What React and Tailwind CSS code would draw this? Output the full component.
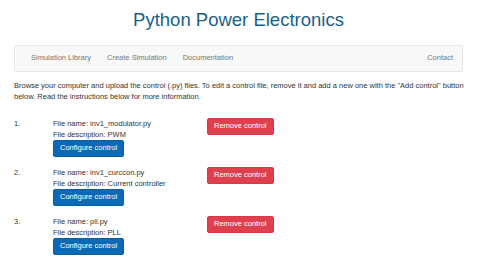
export default function App() {
  const rows = [
    { n: "1.", name: "inv1_modulator.py", desc: "PWM" },
    { n: "2.", name: "inv1_curccon.py", desc: "Current controller" },
    { n: "3.", name: "pll.py", desc: "PLL" },
  ];
  return (
    <div className="w-[480px] h-[270px] overflow-hidden bg-white pl-[14px] pr-[17px] text-[#333] text-[7.5px] leading-[10.5px]" style={{ fontFamily: '"Liberation Sans", Arial, sans-serif' }}>
      <h1 className="pt-[10px] text-center text-[18.5px] leading-[20px] text-[#1a5f86]">Python Power Electronics</h1>
      <nav className="mt-[15px] h-[27px] flex items-center justify-between rounded-[2px] border border-[#e7e7e7] bg-[#f8f8f8] text-[#777] pl-[8px] pr-[1px]">
        <div className="flex">
          <span className="px-[8px]">Simulation Library</span>
          <span className="px-[8px]">Create Simulation</span>
          <span className="px-[8px]">Documentation</span>
        </div>
        <span className="px-[8px]">Contact</span>
      </nav>
      <p className="mt-[9px] -mr-[5px]">
        Browse your computer and upload the control (.py) files. To edit a control file, remove it and add a new one with the "Add control" button below. Read the instructions below for more information.
      </p>
      <div className="mt-[16px] flex flex-col gap-[10px]">
        {rows.map((r) => (
          <div key={r.n} className="flex">
            <div className="w-[39px] pt-[1px]">{r.n}</div>
            <div className="w-[154px] pt-[1px]">
              <div>File name: {r.name}</div>
              <div>File description: {r.desc}</div>
              <button className="h-[17px] px-[6px] flex items-center rounded-[2px] border border-[#0a5fa3] bg-[#0a6ab5] text-white">Configure control</button>
            </div>
            <div>
              <button className="h-[17px] px-[6px] flex items-center rounded-[2px] border border-[#d93a47] bg-[#e0404d] text-white">Remove control</button>
            </div>
          </div>
        ))}
      </div>
    </div>
  );
}
